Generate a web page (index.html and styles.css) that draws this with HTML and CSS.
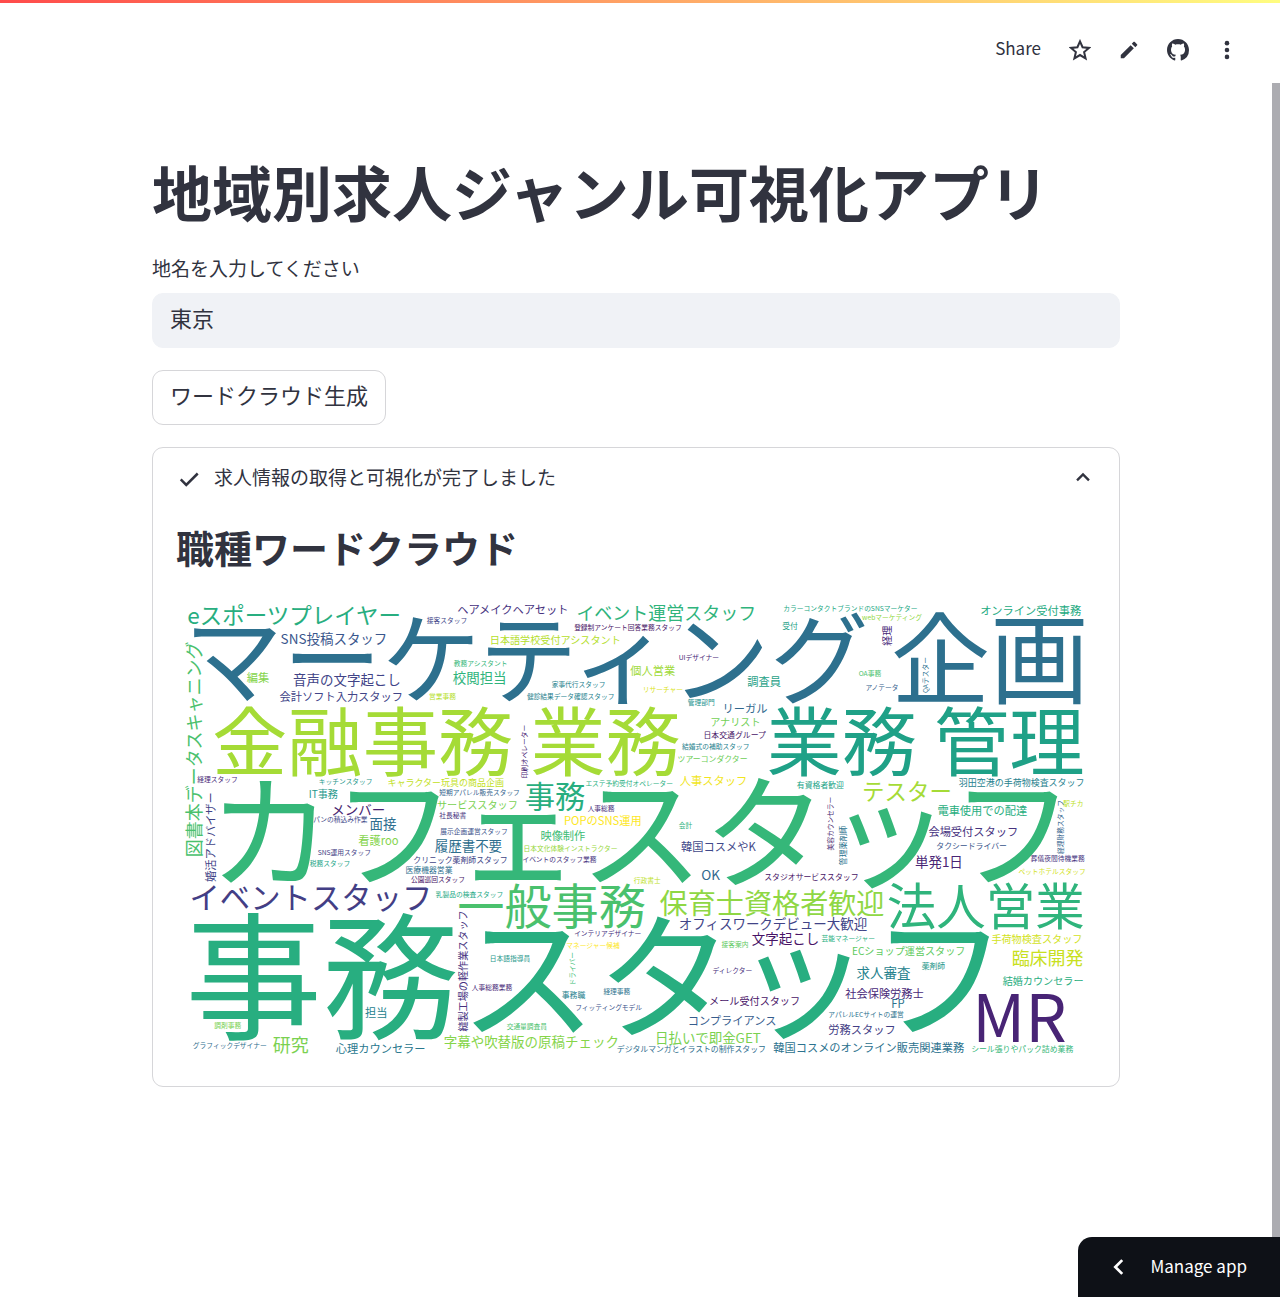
FILE: index.html
```html
<!DOCTYPE html>
<html lang="ja">
<head>
<meta charset="utf-8">
<meta name="viewport" content="width=device-width, initial-scale=1">
<title>地域別求人ジャンル可視化アプリ</title>
<link rel="stylesheet" href="styles.css">
</head>
<body>
<div class="decoration"></div>
<header class="toolbar">
  <button class="tool tool-share" type="button">Share</button>
  <button class="tool" type="button" aria-label="Favorite">
    <svg class="icon" viewBox="0 0 24 24"><path d="M12 2.600l2.800 6.400 7 .7-5.300 4.600 1.600 6.900-6.100-3.700-6.100 3.700 1.600-6.900L2.200 9.700l7-.7z" fill="none" stroke="currentColor" stroke-width="2.200"/></svg>
  </button>
  <button class="tool" type="button" aria-label="Edit">
    <svg class="icon" viewBox="0 0 24 24"><path d="M3 17.500V21h3.500L17.300 10.200l-3.500-3.500zM20.700 7.200c.5-.5.5-1.200 0-1.600l-2.300-2.300c-.5-.5-1.200-.5-1.600 0L15 5.100l3.900 3.900z" fill="currentColor"/></svg>
  </button>
  <button class="tool" type="button" aria-label="GitHub">
    <svg class="icon" viewBox="0 0 16 16"><path d="M8 0C3.580 0 0 3.580 0 8c0 3.540 2.290 6.530 5.470 7.590.4.070.55-.17.55-.38 0-.19-.01-.82-.01-1.490-2.010.37-2.530-.49-2.690-.94-.09-.23-.48-.94-.82-1.130-.28-.15-.68-.52-.01-.53.63-.01 1.080.58 1.230.82.72 1.210 1.870.87 2.330.66.07-.52.28-.87.51-1.070-1.780-.2-3.640-.89-3.640-3.950 0-.87.31-1.590.82-2.150-.08-.2-.36-1.020.08-2.120 0 0 .67-.21 2.200.82.64-.18 1.320-.27 2-.27s1.360.09 2 .27c1.530-1.040 2.200-.82 2.200-.82.44 1.100.16 1.920.08 2.120.51.56.82 1.270.82 2.150 0 3.070-1.870 3.750-3.650 3.950.29.25.54.73.54 1.480 0 1.070-.01 1.930-.01 2.200 0 .21.15.46.55.38A8.010 8.010 0 0 0 16 8c0-4.420-3.580-8-8-8z" fill="currentColor"/></svg>
  </button>
  <button class="tool" type="button" aria-label="Menu">
    <svg class="icon" viewBox="0 0 24 24" fill="currentColor"><circle cx="12" cy="4.500" r="2.500"/><circle cx="12" cy="12" r="2.500"/><circle cx="12" cy="19.500" r="2.500"/></svg>
  </button>
</header>
<div class="viewport">
<main class="page">
  <h1 class="title">地域別求人ジャンル可視化アプリ</h1>
  <div class="field">
    <label class="label" for="place">地名を入力してください</label>
    <input class="input" id="place" type="text" value="東京">
  </div>
  <button class="button" type="button">ワードクラウド生成</button>
  <details class="status" open>
    <summary class="summary">
      <svg class="icon" viewBox="0 0 24 24"><path d="M3 12.500l6 6L21.500 6" fill="none" stroke="currentColor" stroke-width="2.700"/></svg>
      <span class="summary-text">求人情報の取得と可視化が完了しました</span>
      <svg class="icon" viewBox="0 0 24 24"><path d="M5.500 13.500l6.500-6.500 6.500 6.500" fill="none" stroke="currentColor" stroke-width="2.600"/></svg>
    </summary>
    <div class="status-body">
      <h2 class="subtitle">職種ワードクラウド</h2>
      <svg class="cloud" viewBox="-10 -9 818 418" role="img" aria-label="職種ワードクラウド">
        <g font-size="122" fill="#28ae80"><text x="-2" y="379">事務スタッフ</text></g>
        <g font-size="110" fill="#35b779"><text x="19" y="245">カフェスタッフ</text></g>
        <g font-size="88" fill="#2d708e"><text x="-3" y="83">マーケティング 企画</text></g>
        <g font-size="67">
          <text x="22" y="148" fill="#a5db36">金融事務 業務</text>
          <text x="515" y="148" fill="#1fa187">業務 管理</text>
        </g>
        <g font-size="58"><text x="698" y="390" fill="#482475">MR</text></g>
        <g font-size="44"><text x="622" y="286" fill="#2fb47c">法人営業</text></g>
        <g font-size="42"><text x="240" y="285" fill="#4ac16d">一般事務</text></g>
        <g font-size="27">
          <text x="2" y="272" fill="#433e85">イベントスタッフ</text>
          <text x="300" y="182" fill="#28ae80">事務</text>
        </g>
        <g font-size="25"><text x="420" y="276" fill="#8fd744">保育士資格者歓迎</text></g>
        <g font-size="20">
          <text x="0" y="19" fill="#28ae80">eスポーツプレイヤー</text>
          <text x="600" y="175" fill="#a5db36">テスター</text>
        </g>
        <g font-size="16">
          <text x="346" y="15" fill="#2fb47c">イベント運営スタッフ</text>
          <text transform="translate(12 226) rotate(-90)" fill="#4ac16d">図書本データスキャニング</text>
          <text x="733" y="322" fill="#c8e020">臨床開発</text>
          <text x="76" y="399" fill="#7ad151">研究</text>
        </g>
        <g font-size="12">
          <text x="83" y="36" fill="#39568c">SNS投稿スタッフ</text>
          <text x="94" y="73" fill="#414487">音声の文字起こし</text>
          <text x="236" y="71" fill="#2fb47c">校閲担当</text>
          <text x="128" y="188" fill="#481f70">メンバー</text>
          <text x="162" y="201" fill="#2e6e8e">面接</text>
          <text x="220" y="220" fill="#2e6e8e">履歴書不要</text>
          <text x="457" y="246" fill="#31688e">OK</text>
          <text x="647" y="235" fill="#482475">単発1日</text>
          <text x="437" y="290" fill="#414487">オフィスワークデビュー大歓迎</text>
          <text x="502" y="303" fill="#481467">文字起こし</text>
          <text x="228" y="395" fill="#86d549">字幕や吹替版の原稿チェック</text>
          <text x="416" y="391" fill="#7ad151">日払いで即金GET</text>
          <text x="595" y="333" fill="#26828e">求人審査</text>
        </g>
        <g font-size="10">
          <text x="82" y="87" fill="#414487">会計ソフト入力スタッフ</text>
          <text x="53" y="70" fill="#84d44b">編集</text>
          <text x="240" y="10" fill="#46327e">ヘアメイクヘアセット</text>
          <text x="394" y="64" fill="#a0da39">個人営業</text>
          <text x="498" y="74" fill="#1fa187">調査員</text>
          <text x="476" y="98" fill="#31688e">リーガル</text>
          <text x="705" y="11" fill="#25ab82">オンライン受付事務</text>
          <text x="438" y="162" fill="#f1e51d">人事スタッフ</text>
          <text x="152" y="215" fill="#84d44b">看護roo</text>
          <text transform="translate(25 248) rotate(-90)" fill="#414487">婚活アドバイザー</text>
          <text x="335" y="197" fill="#fde725">POPのSNS運用</text>
          <text x="314" y="211" fill="#3dbc74">映像制作</text>
          <text x="439" y="220" fill="#3f4889">韓国コスメやK</text>
          <text x="667" y="188" fill="#28ae80">電車使用での配達</text>
          <text x="659" y="207" fill="#46327e">会場受付スタッフ</text>
          <text x="445" y="375" fill="#365c8d">コンプライアンス</text>
          <text x="585" y="351" fill="#482878">社会保険労務士</text>
          <text x="626" y="360" fill="#2c728e">FP</text>
          <text x="570" y="383" fill="#433e85">労務スタッフ</text>
          <text x="521" y="399" fill="#2c728e">韓国コスメのオンライン販売関連業務</text>
          <text x="132" y="400" fill="#2a788e">心理カウンセラー</text>
          <text x="158" y="368" fill="#26828e">担当</text>
        </g>
        <g font-size="9">
          <text x="269" y="36" fill="#b5de2b">日本語学校受付アシスタント</text>
          <text x="465" y="109" fill="#73d056">アナリスト</text>
          <text transform="translate(626 38) rotate(-90)" fill="#482878">経理</text>
          <text x="108" y="173" fill="#1f988b">IT事務</text>
          <text x="222" y="183" fill="#7ad151">サービススタッフ</text>
          <text transform="translate(249 381) rotate(-90)" fill="#46327e">縫製工場の軽作業スタッフ</text>
          <text x="464" y="357" fill="#481467">メール受付スタッフ</text>
          <text x="591" y="313" fill="#60ca60">ECショップ運営スタッフ</text>
          <text x="715" y="302" fill="#d2e21b">手荷物検査スタッフ</text>
          <text x="725" y="340" fill="#28ae80">結婚カウンセラー</text>
        </g>
        <g font-size="8">
          <text x="178" y="163" fill="#c2df23">キャラクター玩具の商品企画</text>
          <text x="686" y="163" fill="#26818e">羽田空港の手荷物検査スタッフ</text>
        </g>
        <g font-size="7">
          <text x="459" y="120" fill="#481467">日本交通グループ</text>
          <text x="436" y="141" fill="#6ece58">ツアーコンダクター</text>
          <text x="529" y="23" fill="#1fa187">受付</text>
          <text x="542" y="164" fill="#20a386">有資格者歓迎</text>
          <text x="201" y="231" fill="#414487">クリニック薬剤師スタッフ</text>
          <text x="194" y="240" fill="#2d708e">医療機器営業</text>
          <text x="513" y="246" fill="#471365">スタジオサービススタッフ</text>
          <text transform="translate(586 233) rotate(-90)" fill="#2c728e">管理薬剤師</text>
          <text x="666" y="219" fill="#39568c">タクシードライバー</text>
          <text x="333" y="351" fill="#26828e">事務職</text>
          <text x="382" y="399" fill="#2e6e8e">デジタルマンガとイラストの制作スタッフ</text>
          <text x="653" y="325" fill="#1f988b">薬剤師</text>
          <text x="697" y="399" fill="#35b779">シール張りやパック詰め業務</text>
        </g>
        <g font-size="6">
          <text x="213" y="18" fill="#414487">接客スタッフ</text>
          <text x="344" y="24" fill="#471365">登録制アンケート回答業務スタッフ</text>
          <text x="237" y="56" fill="#35b779">教務アシスタント</text>
          <text x="215" y="85" fill="#b5de2b">営業事務</text>
          <text x="324" y="75" fill="#26828e">家事代行スタッフ</text>
          <text x="302" y="85" fill="#277f8e">健診結果データ確認スタッフ</text>
          <text x="405" y="79" fill="#dae319">リサーチャー</text>
          <text x="437" y="51" fill="#482878">UIデザイナー</text>
          <text x="445" y="91" fill="#21918c">管理部門</text>
          <text x="440" y="130" fill="#26828e">結婚式の補助スタッフ</text>
          <text x="530" y="7" fill="#22a884">カラーコンタクトブランドのSNSマーケター</text>
          <text x="600" y="15" fill="#90d743">webマーケティング</text>
          <text transform="translate(659 80) rotate(-90)" fill="#2c728e">QAテスター</text>
          <text x="597" y="65" fill="#4ac16d">OA事務</text>
          <text x="603" y="77" fill="#34618d">アノテータ</text>
          <text transform="translate(302 156) rotate(-90)" fill="#482173">印刷オペレーター</text>
          <text x="9" y="159" fill="#482878">経理スタッフ</text>
          <text x="117" y="161" fill="#1f988b">キッチンスタッフ</text>
          <text x="354" y="163" fill="#2ab07f">エステ予約受付オペレーター</text>
          <text x="112" y="195" fill="#3f4889">パンの積込み作業</text>
          <text x="116" y="224" fill="#433e85">SNS運用スタッフ</text>
          <text x="109" y="234" fill="#20a486">税務スタッフ</text>
          <text x="224" y="171" fill="#33638d">短期アパレル販売スタッフ</text>
          <text x="224" y="191" fill="#46327e">社長秘書</text>
          <text x="225" y="205" fill="#3b528b">展示企画運営スタッフ</text>
          <text x="199" y="248" fill="#471365">公園巡回スタッフ</text>
          <text x="221" y="261" fill="#22a884">乳製品の検査スタッフ</text>
          <text x="356" y="185" fill="#472f7d">人事総務</text>
          <text x="299" y="220" fill="#98d83e">日本文化体験インストラクター</text>
          <text x="298" y="230" fill="#46327e">イベントのスタッフ業務</text>
          <text x="437" y="200" fill="#2db27d">会計</text>
          <text x="397" y="249" fill="#bddf26">行政書士</text>
          <text transform="translate(574 220) rotate(-90)" fill="#481f70">美容カウンセラー</text>
          <text transform="translate(779 223) rotate(-90)" fill="#33638d">経理財務スタッフ</text>
          <text x="779" y="180" fill="#bddf26">駅チカ</text>
          <text x="750" y="229" fill="#46327e">葬儀夜間待機業務</text>
          <text x="739" y="241" fill="#d2e21b">ペットホテルスタッフ</text>
          <text x="344" y="296" fill="#46327e">インテリアデザイナー</text>
          <text x="564" y="300" fill="#2ab07f">芸能マネージャー</text>
          <text x="337" y="307" fill="#fde725">マネージャー候補</text>
          <text x="475" y="306" fill="#5ec962">接客案内</text>
          <text x="269" y="318" fill="#1f988b">日本語指導員</text>
          <text transform="translate(345 340) rotate(-90)" fill="#3dbc74">ドライバー</text>
          <text x="467" y="329" fill="#472f7d">ディレクター</text>
          <text x="253" y="344" fill="#482878">人事総務業務</text>
          <text x="370" y="348" fill="#2c728e">経理事務</text>
          <text x="345" y="362" fill="#3b528b">フィッティングモデル</text>
          <text x="284" y="379" fill="#4ac16d">交通量調査員</text>
          <text x="570" y="368" fill="#2c728e">アパレルECサイトの運営</text>
          <text x="5" y="396" fill="#2e6e8e">グラフィックデザイナー</text>
          <text x="24" y="378" fill="#7ad151">調剤事務</text>
        </g>
      </svg>
    </div>
  </details>
</main>
<div class="scroll-thumb"></div>
</div>
<button class="manage" type="button">
  <svg class="icon" viewBox="0 0 24 24"><path d="M15.500 4.500L8 12l7.500 7.500" fill="none" stroke="currentColor" stroke-width="3"/></svg>
  <span class="manage-text">Manage app</span>
</button>
</body>
</html>
```
FILE: styles.css
```css
* { box-sizing: border-box; }

body {
  margin: 0;
  min-height: 100vh;
  display: flex;
  flex-direction: column;
  background: #fff;
  color: #31333f;
  font-family: "Noto Sans CJK JP", "Noto Sans", sans-serif;
  font-size: 22px;
}

button, input { font: inherit; color: inherit; }

.icon { display: block; width: 22px; height: 22px; flex: none; }

.decoration { height: 3px; background: linear-gradient(90deg, #ff4b4b, #fffd80); }

.toolbar {
  display: flex;
  justify-content: flex-end;
  align-items: center;
  height: 80px;
  padding: 14px 29px 0 0;
}

.tool {
  display: flex;
  justify-content: center;
  width: 49px;
  padding: 0;
  border: 0;
  background: none;
  font-size: 17px;
  line-height: 24px;
}

.tool-share { width: auto; padding: 0 14px 5px 0; }

.viewport { flex: 1; display: flex; }

.scroll-thumb { width: 8px; background: #acacb1; }

.page {
  flex: 1;
  min-width: 0;
  max-width: 1012px;
  margin: 0 auto;
  padding: 66px 22px 200px;
  display: flex;
  flex-direction: column;
  align-items: stretch;
  gap: 22px;
}

.title { margin: 0; font-size: 60px; line-height: 84px; font-weight: 700; }

.field { display: flex; flex-direction: column; gap: 13px; }

.label { font-size: 19px; line-height: 25px; }

.input {
  width: 100%;
  height: 55px;
  padding: 0 17px 7px;
  border: 1px solid #f0f2f6;
  border-radius: 11px;
  background: #f0f2f6;
}

.button {
  align-self: flex-start;
  height: 55px;
  padding: 0 17px 7px;
  border: 1px solid #d6d6d9;
  border-radius: 11px;
  background: #fff;
}

.status { border: 1px solid #d6d6d9; border-radius: 11px; }

.summary {
  display: flex;
  align-items: center;
  gap: 14px;
  padding: 14px 25px;
  font-size: 19px;
  line-height: 29px;
  list-style: none;
}

.summary-text { flex: 1; padding-bottom: 4px; }

.status-body { padding: 11px 23px 23px; }

.subtitle { margin: 0 0 19px; font-size: 38px; line-height: 54px; font-weight: 700; }

.cloud { display: block; width: 100%; height: auto; }

.manage {
  position: fixed;
  right: 0;
  bottom: 0;
  display: flex;
  align-items: center;
  gap: 20px;
  height: 60px;
  padding: 0 33px 0 30px;
  border: 0;
  border-radius: 14px 0 0 0;
  background: #0e1117;
  color: #fff;
  font-size: 17px;
}

.manage-text { padding-bottom: 3px; }
```
